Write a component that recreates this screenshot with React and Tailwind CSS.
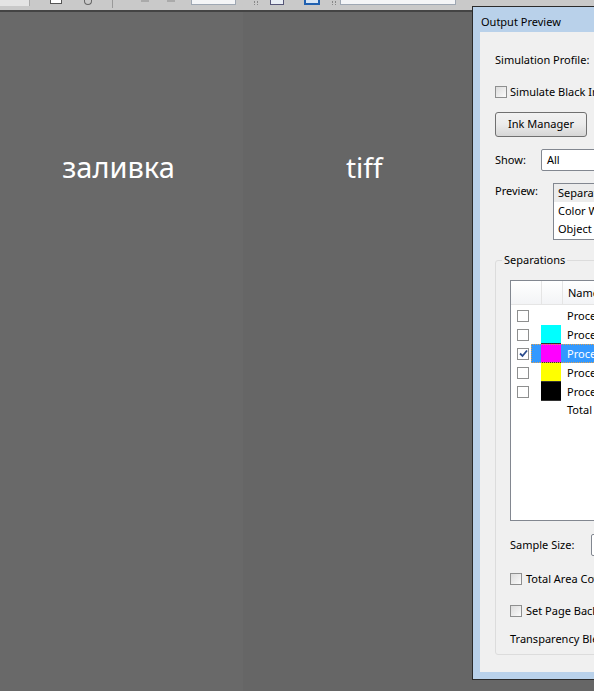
import React from 'react';

const ui = { fontFamily: '"Noto Sans", "DejaVu Sans", sans-serif' };

function Tick() {
  return (
    <svg width="9" height="9" viewBox="0 0 9 9">
      <path d="M1 4.5 L3.5 7 L8 1.5" stroke="#2a4b8d" strokeWidth="1.8" fill="none" />
    </svg>
  );
}

function Check({ checked }) {
  return (
    <span className="w-[12px] h-[12px] shrink-0 border border-[#8e8f8f] bg-gradient-to-br from-[#dcdcdc] to-[#fbfbfb] flex items-center justify-center">
      {checked && <Tick />}
    </span>
  );
}

const inks = [
  { name: 'Process Plates', color: null },
  { name: 'Process Cyan', color: 'bg-[#00ffff]' },
  { name: 'Process Magenta', color: 'bg-[#ff00ff]', selected: true },
  { name: 'Process Yellow', color: 'bg-[#ffff00]' },
  { name: 'Process Black', color: 'bg-[#000000]' },
];

function InkRow({ ink }) {
  return (
    <div className="flex h-[19px] items-center">
      <div className="w-[20px] pl-[6px] flex items-center">
        <span className="w-[12px] h-[12px] border border-[#8e8f8f] bg-white flex items-center justify-center">
          {ink.selected && <Tick />}
        </span>
      </div>
      <div className={`flex-1 h-full flex ${ink.selected ? 'bg-[#3399ff] outline outline-1 outline-dotted outline-[#e0a050] -outline-offset-1' : ''}`}>
        <div className="w-[10px]" />
        <div className={`w-[20px] h-full ${ink.color ? ink.color + ' border-b border-[#333]' : ''}`} />
        <span className={`pl-[6px] text-[11px] leading-[19px] whitespace-nowrap ${ink.selected ? 'text-white' : 'text-black'}`}>{ink.name}</span>
      </div>
    </div>
  );
}

function Toolbar() {
  return (
    <div className="h-[12px] bg-[#c9c9c9] border-b-2 border-[#444] flex items-start relative overflow-hidden">
      <div className="w-[30px] h-[6px] bg-[#e4e4e4] border-r border-[#aaa]" />
      <div className="ml-[20px] w-[12px] h-[4px] border border-t-0 border-[#555] bg-white" />
      <div className="ml-[22px] w-[8px] h-[5px] rounded-b-full border border-t-0 border-[#666]" />
      <div className="ml-[20px] w-px h-[8px] bg-[#999]" />
      <div className="ml-[28px] w-[8px] h-[2px] bg-[#aaa]" />
      <div className="ml-[18px] w-[8px] h-[2px] bg-[#aaa]" />
      <div className="ml-[16px] w-[45px] h-[5px] bg-[#f4f5f7] border border-t-0 border-[#9ea7b3]" />
      <div className="ml-[18px] w-[4px] h-[4px] mt-[1px] border-l border-r border-dotted border-[#888]" />
      <div className="ml-[12px] w-[14px] h-[5px] bg-[#e9eef5] border border-t-0 border-[#557]" />
      <div className="ml-[20px] w-[16px] h-[5px] bg-[#d8e6f5] border-2 border-t-0 border-[#2060b0]" />
      <div className="ml-[12px] w-[4px] h-[4px] mt-[1px] border-l border-r border-dotted border-[#888]" />
      <div className="ml-[4px] w-[116px] h-[5px] bg-[#f4f5f7] border border-t-0 border-[#9ea7b3]" />
    </div>
  );
}

export default function App() {
  return (
    <div className="w-[594px] h-[691px] overflow-hidden relative bg-[#666666] flex flex-col" style={ui}>
      <Toolbar />
      <div className="flex-1 flex">
        <div className="w-[243px] bg-[#696969] flex justify-center pt-[135px] pr-[6px]">
          <span className="text-white text-[29px] leading-[40px]">заливка</span>
        </div>
        <div className="flex-1 bg-[#666666] flex pt-[135px] pl-[103px]">
          <span className="text-white text-[28px] leading-[40px]">tiff</span>
        </div>
      </div>

      {/* Output Preview window */}
      <div className="absolute left-[472px] top-[6px] w-[320px] h-[674px] border border-[#2b2b2b] bg-[#b9d1ea] flex flex-col px-[7px] pb-[7px]">
        <div className="h-[25px] flex items-end pb-[2px] pl-[1px] text-[11px] text-black whitespace-nowrap">Output Preview</div>
        <div className="flex-1 bg-[#f0f0f0] pl-[15px] flex flex-col text-[11px] text-black">
          <div className="h-[17px] mt-[20px] flex items-center whitespace-nowrap">Simulation Profile:</div>
          <div className="mt-[17px] h-[12px] flex items-center gap-[3px] whitespace-nowrap">
            <Check />
            <span>Simulate Black Ink</span>
          </div>
          <div className="mt-[14px] w-[92px] h-[25px] rounded-[3px] border border-[#707070] bg-gradient-to-b from-[#f2f2f2] via-[#ebebeb] to-[#d6d6d6] flex items-center justify-center whitespace-nowrap">
            Ink Manager
          </div>
          <div className="mt-[12px] flex items-center h-[22px]">
            <span className="w-[46px]">Show:</span>
            <div className="flex-1 h-[22px] border border-[#828790] bg-white rounded-[2px] pl-[5px] flex items-center">All</div>
          </div>
          <div className="mt-[12px] flex items-start">
            <span className="w-[58px] leading-[16px]">Preview:</span>
            <div className="flex-1 h-[57px] border border-[#828790] bg-white pl-[4px] flex flex-col whitespace-nowrap">
              <span className="h-[18px] leading-[18px] bg-[#ececec] -ml-[4px] pl-[4px]">Separations</span>
              <span className="h-[18px] leading-[18px]">Color Warnings</span>
              <span className="h-[18px] leading-[18px]">Object Inspector</span>
            </div>
          </div>

          {/* Separations group */}
          <div className="mt-[20px] flex-1 mb-[17px] border border-[#dcdcdc] rounded-[3px] relative pl-[14px] flex flex-col">
            <span className="absolute -top-[10px] left-[6px] px-[2px] bg-[#f0f0f0] leading-[18px]">Separations</span>
            <div className="mt-[19px] h-[241px] border border-[#828790] bg-white flex flex-col">
              <div className="h-[24px] flex bg-gradient-to-b from-white to-[#f3f4f6] border-b border-[#e5e5e5]">
                <div className="w-[31px] border-r border-[#e5e5e5]" />
                <div className="w-[21px] border-r border-[#e5e5e5]" />
                <span className="pl-[5px] leading-[24px] whitespace-nowrap">Name</span>
              </div>
              <div className="mt-[1px] flex flex-col">
                {inks.map((ink) => (
                  <InkRow key={ink.name} ink={ink} />
                ))}
                <div className="flex h-[19px] items-center">
                  <div className="w-[50px]" />
                  <span className="pl-[6px] whitespace-nowrap">Total Ink</span>
                </div>
              </div>
            </div>
            <div className="mt-[13px] flex items-center h-[22px]">
              <span className="w-[81px] whitespace-nowrap">Sample Size:</span>
              <div className="flex-1 h-[22px] border border-[#828790] bg-white rounded-[2px]" />
            </div>
            <div className="mt-[17px] h-[12px] flex items-center gap-[4px] whitespace-nowrap">
              <Check />
              <span>Total Area Coverage</span>
            </div>
            <div className="mt-[20px] h-[12px] flex items-center gap-[4px] whitespace-nowrap">
              <Check />
              <span>Set Page Background Color</span>
            </div>
            <div className="mt-[14px] h-[16px] flex items-center whitespace-nowrap">Transparency Blending Space</div>
          </div>
        </div>
      </div>
    </div>
  );
}
